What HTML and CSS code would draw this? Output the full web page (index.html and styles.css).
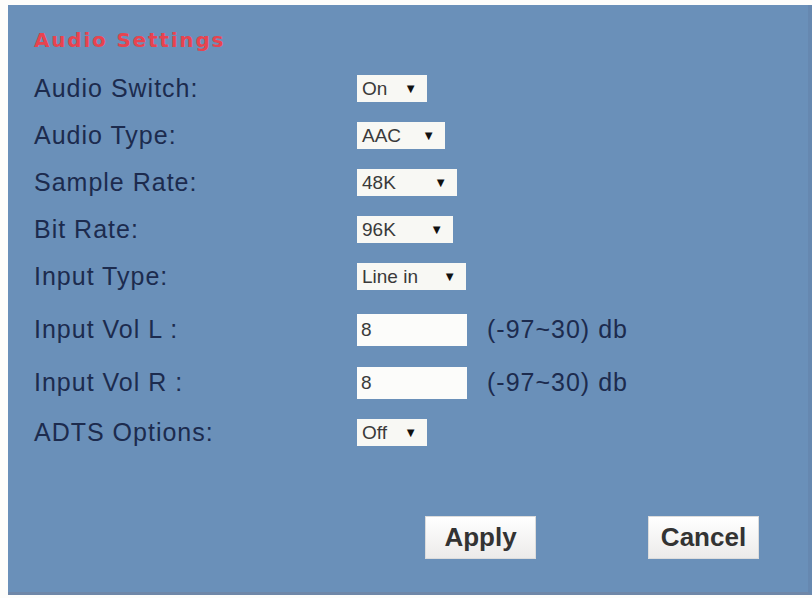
FILE: index.html
```html
<!DOCTYPE html>
<html lang="en">
<head>
    <meta charset="UTF-8">
    <meta name="viewport" content="width=device-width, initial-scale=1.0">
    <title>Audio Settings</title>
    <link rel="stylesheet" href="styles.css">
</head>
<body>

    <div class="panel">
        <h2 class="title">Audio Settings</h2>

        <div class="row">
            <span class="label">Audio Switch:</span>
            <div class="select w-on"><span>On</span><span class="arrow">&#9660;</span></div>
        </div>
        <div class="row">
            <span class="label">Audio Type:</span>
            <div class="select w-aac"><span>AAC</span><span class="arrow">&#9660;</span></div>
        </div>
        <div class="row">
            <span class="label">Sample Rate:</span>
            <div class="select w-48k"><span>48K</span><span class="arrow">&#9660;</span></div>
        </div>
        <div class="row">
            <span class="label">Bit Rate:</span>
            <div class="select w-96k"><span>96K</span><span class="arrow">&#9660;</span></div>
        </div>
        <div class="row">
            <span class="label">Input Type:</span>
            <div class="select w-line"><span>Line in</span><span class="arrow">&#9660;</span></div>
        </div>

        <!-- Volume inputs -->
        <div class="row row-input first-input">
            <span class="label">Input Vol L :</span>
            <input class="text-box" type="text" value="8">
            <span class="range">(-97~30) db</span>
        </div>
        <div class="row row-input">
            <span class="label">Input Vol R :</span>
            <input class="text-box" type="text" value="8">
            <span class="range">(-97~30) db</span>
        </div>

        <div class="row">
            <span class="label">ADTS Options:</span>
            <div class="select w-on"><span>Off</span><span class="arrow">&#9660;</span></div>
        </div>

        <div class="buttons">
            <button class="btn">Apply</button>
            <button class="btn">Cancel</button>
        </div>
    </div>

</body>
</html>
```

FILE: styles.css
```css
body {
    margin: 0;
    background: #fdfdfb;
    font-family: 'Liberation Sans', Arial, sans-serif;
    overflow: hidden;
}

.panel {
    margin: 5px 0 0 8px;
    height: 590px;
    box-sizing: border-box;
    padding: 17px 0 0 26px;
    background-color: #6a90b9;
    border-right: 4px solid #6688b0;
    border-bottom: 3px solid #6f87a8;
}

.title {
    margin: 0;
    height: 36px;
    line-height: 36px;
    font-family: 'DejaVu Sans', Verdana, sans-serif;
    font-size: 20px;
    font-weight: bold;
    letter-spacing: 1.8px;
    color: #e8434f;
}

.row {
    display: flex;
    align-items: center;
    height: 47px;
}

.title + .row {
    margin-top: 7px;
}

.label {
    width: 323px;
    font-size: 25px;
    letter-spacing: 1px;
    color: #1c2b4e;
}

/* Fake dropdowns */
.select {
    display: flex;
    justify-content: space-between;
    align-items: center;
    box-sizing: border-box;
    height: 27px;
    padding: 0 10px 0 5px;
    background-color: #f8f8f4;
    font-size: 19px;
    color: #3a3a3a;
}

.arrow {
    font-size: 13px;
    color: #111;
}

.w-on { width: 70px; }
.w-aac { width: 88px; }
.w-48k { width: 100px; }
.w-96k { width: 96px; }
.w-line { width: 109px; }

/* Volume inputs */
.row-input {
    height: 53px;
}

.first-input {
    margin-top: 3px;
}

.text-box {
    box-sizing: border-box;
    width: 110px;
    height: 32px;
    padding: 0 4px;
    border: none;
    background-color: #fcfcfa;
    font-family: 'Liberation Sans', Arial, sans-serif;
    font-size: 19px;
    color: #3a3a3a;
}

.range {
    margin-left: 20px;
    font-size: 25px;
    letter-spacing: 1px;
    color: #1c2b4e;
}

/* Buttons */
.buttons {
    display: flex;
    gap: 112px;
    margin-top: 60px;
    padding-left: 391px;
}

.btn {
    box-sizing: border-box;
    width: 111px;
    height: 43px;
    border: 1px solid #dcdcdc;
    background: linear-gradient(#ffffff, #ecebea);
    font-family: 'Liberation Sans', Arial, sans-serif;
    font-size: 26px;
    font-weight: bold;
    color: #333;
}
```
